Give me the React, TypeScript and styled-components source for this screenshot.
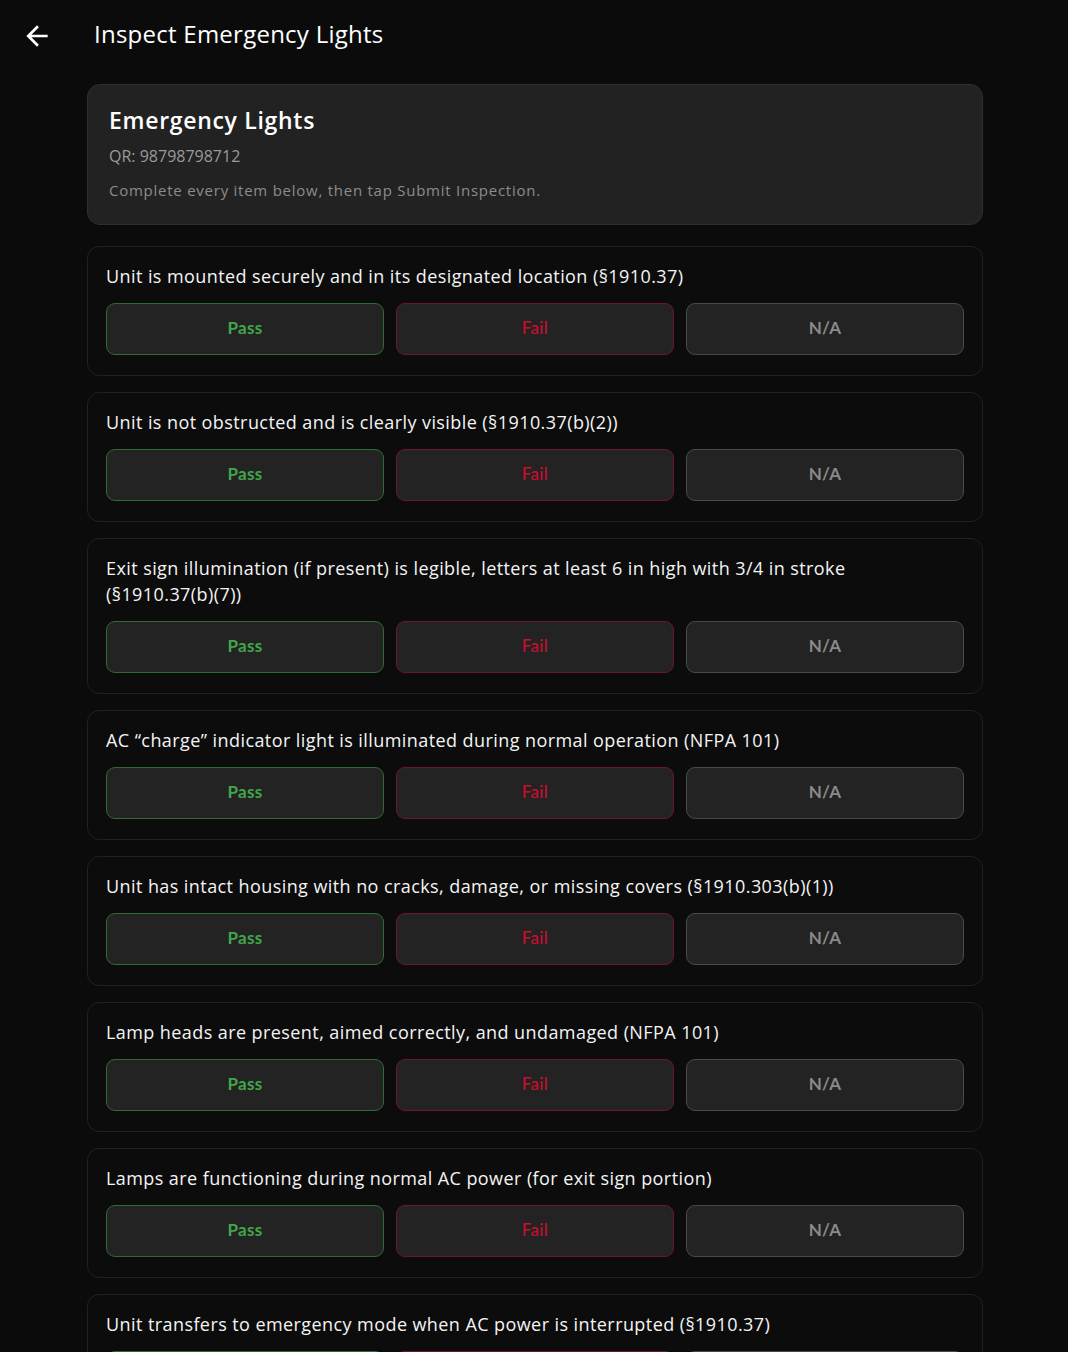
import React from "react";
import styled, { createGlobalStyle } from "styled-components";

const Global = createGlobalStyle`
  html, body { margin: 0; padding: 0; background: #0b0b0b; }
  body { font-family: "Open Sans", "Noto Sans", sans-serif; color: #f2f2f2; }
  * { box-sizing: border-box; }
`;

const Page = styled.div`
  min-height: 1352px;
  background: #0b0b0b;
`;

const TopBar = styled.header`
  height: 68px;
  display: flex;
  align-items: center;
  padding-left: 21px;
`;

const BackButton = styled.button`
  width: 32px;
  height: 32px;
  padding: 0;
  margin-top: 4px;
  border: none;
  background: none;
  color: #ffffff;
  display: flex;
  align-items: center;
  justify-content: center;
  cursor: pointer;
`;

const PageTitle = styled.h1`
  margin: 0 0 2px 41px;
  font-size: 24px;
  font-weight: 400;
  letter-spacing: 0.25px;
  color: #ffffff;
`;

const Content = styled.main`
  width: 896px;
  margin: 16px 0 0 87px;
  display: flex;
  flex-direction: column;
`;

const InfoCard = styled.section`
  background: #222222;
  border: 1px solid #303030;
  border-radius: 13px;
  padding: 20px 21px 23px;
  margin-bottom: 21px;
`;

const InfoTitle = styled.h2`
  margin: 0;
  font-size: 23px;
  line-height: 30px;
  font-weight: 600;
  letter-spacing: 0.7px;
  color: #ffffff;
`;

const InfoQr = styled.div`
  margin-top: 9px;
  font-size: 16px;
  line-height: 24px;
  color: #9a9a9a;
`;

const InfoHint = styled.div`
  margin-top: 11px;
  font-size: 15px;
  line-height: 22px;
  letter-spacing: 0.75px;
  color: #8c8c8c;
`;

const ItemList = styled.div`
  display: flex;
  flex-direction: column;
  gap: 16px;
`;

const ItemCard = styled.div`
  background: #0c0c0c;
  border: 1px solid #212121;
  border-radius: 12px;
  padding: 16px 18px 20px;
  display: flex;
  flex-direction: column;
  gap: 14px;
`;

const ItemText = styled.div`
  font-size: 18px;
  line-height: 26px;
  font-weight: 500;
  letter-spacing: 0.42px;
  color: #f4f4f4;
`;

const Citation = styled.span`
  white-space: nowrap;
`;

const Choices = styled.div`
  display: grid;
  grid-template-columns: repeat(3, 1fr);
  gap: 12px;
`;

type Tone = "pass" | "fail" | "na";

const toneBorder: Record<Tone, string> = {
  pass: "#2f6b34",
  fail: "#6e1828",
  na: "#4a4a4a",
};
const toneText: Record<Tone, string> = {
  pass: "#41a64b",
  fail: "#c8102e",
  na: "#8a8a8a",
};

const Choice = styled.button<{ $tone: Tone }>`
  height: 52px;
  padding: 0 0 3px;
  background: #232323;
  border: 1px solid ${(p) => toneBorder[p.$tone]};
  border-radius: 9px;
  color: ${(p) => toneText[p.$tone]};
  font-family: Lato, "Noto Sans", sans-serif;
  font-size: 17px;
  font-weight: ${(p) => (p.$tone === "fail" ? 500 : 700)};
  letter-spacing: 0.3px;
  cursor: pointer;
`;

const items: { text: string; code: string }[] = [
  { text: "Unit is mounted securely and in its designated location", code: "(§1910.37)" },
  { text: "Unit is not obstructed and is clearly visible", code: "(§1910.37(b)(2))" },
  {
    text: "Exit sign illumination (if present) is legible, letters at least 6 in high with 3/4 in stroke",
    code: "(§1910.37(b)(7))",
  },
  { text: "AC “charge” indicator light is illuminated during normal operation", code: "(NFPA 101)" },
  {
    text: "Unit has intact housing with no cracks, damage, or missing covers",
    code: "(§1910.303(b)(1))",
  },
  { text: "Lamp heads are present, aimed correctly, and undamaged", code: "(NFPA 101)" },
  { text: "Lamps are functioning during normal AC power", code: "(for exit sign portion)" },
  { text: "Unit transfers to emergency mode when AC power is interrupted", code: "(§1910.37)" },
];

const BackArrow = () => (
  <svg width="32" height="32" viewBox="0 0 24 24" fill="currentColor">
    <path d="M20 11H7.83l5.59-5.59L12 4l-8 8 8 8 1.41-1.41L7.83 13H20v-2z" />
  </svg>
);

export default function App() {
  return (
    <Page>
      <Global />
      <TopBar>
        <BackButton aria-label="Back">
          <BackArrow />
        </BackButton>
        <PageTitle>Inspect Emergency Lights</PageTitle>
      </TopBar>
      <Content>
        <InfoCard>
          <InfoTitle>Emergency Lights</InfoTitle>
          <InfoQr>QR: 98798798712</InfoQr>
          <InfoHint>Complete every item below, then tap Submit Inspection.</InfoHint>
        </InfoCard>
        <ItemList>
          {items.map((item) => (
            <ItemCard key={item.text}>
              <ItemText>
                {item.text} <Citation>{item.code}</Citation>
              </ItemText>
              <Choices>
                <Choice $tone="pass">Pass</Choice>
                <Choice $tone="fail">Fail</Choice>
                <Choice $tone="na">N/A</Choice>
              </Choices>
            </ItemCard>
          ))}
        </ItemList>
      </Content>
    </Page>
  );
}
